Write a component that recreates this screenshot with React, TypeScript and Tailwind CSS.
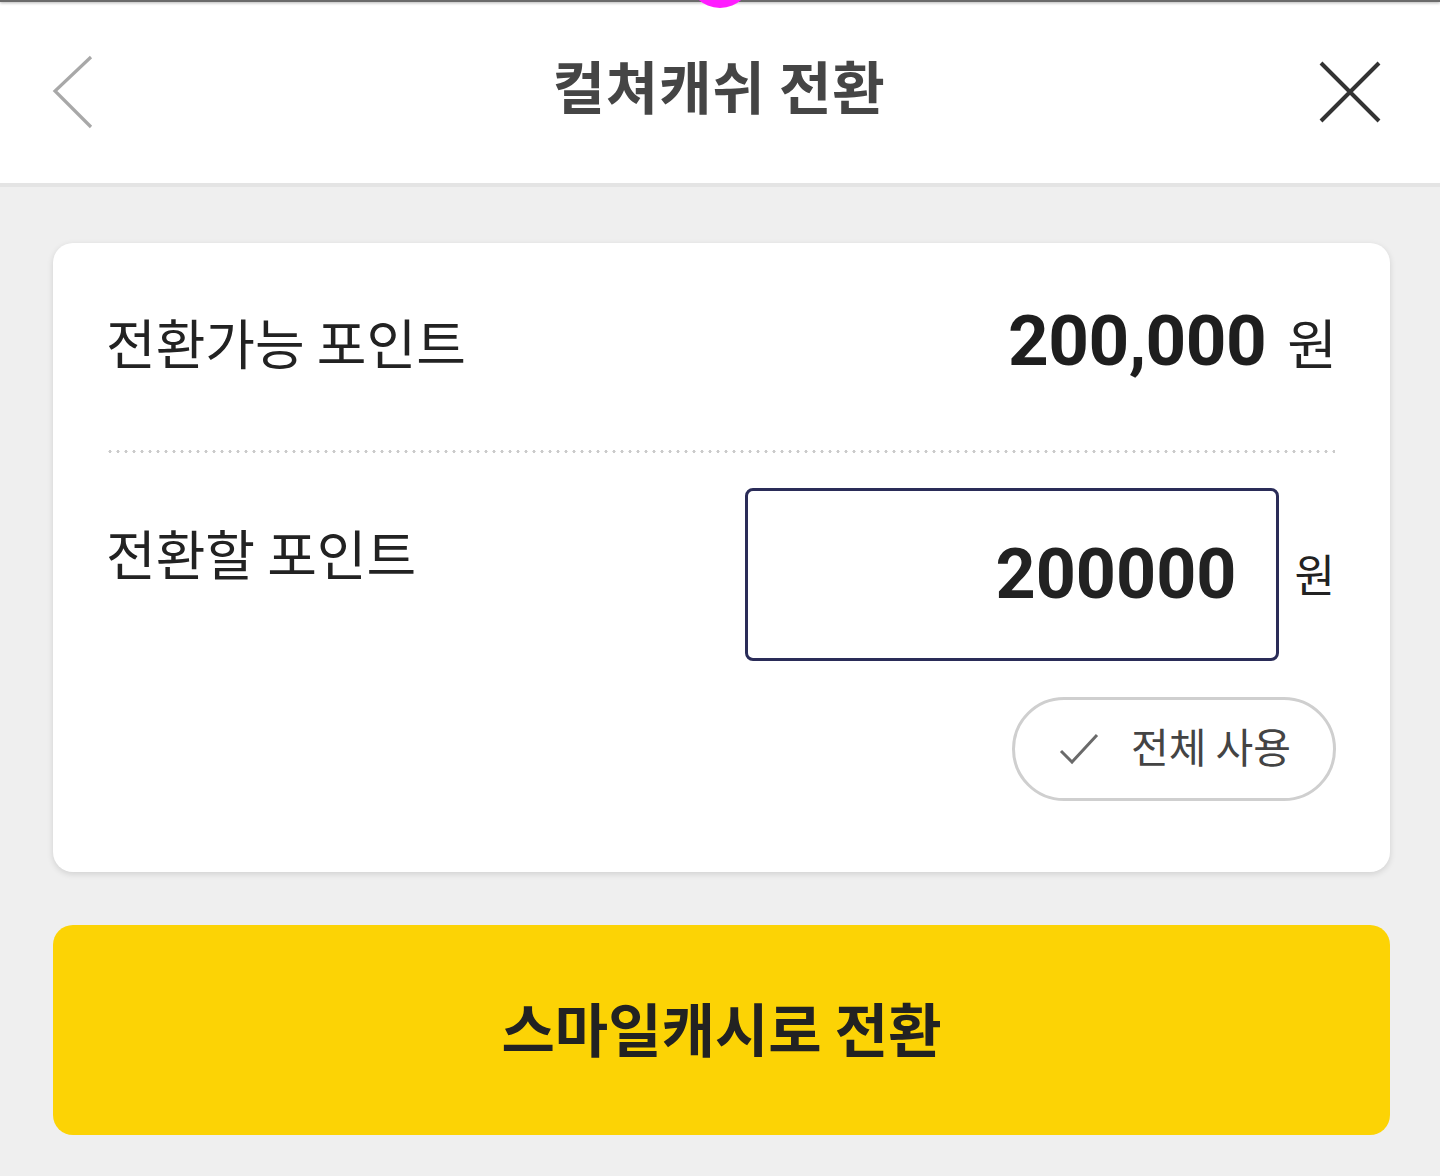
import React from "react";

const KR = "font-['Noto_Sans_CJK_KR','Noto_Sans',sans-serif]";
const NUM = "font-['Roboto','Noto_Sans_CJK_KR',sans-serif]";

export default function App() {
  return (
    <div className={`min-h-[1176px] w-[1440px] bg-[#efefef] ${KR}`}>
      {/* 상단 헤더 */}
      <header className="relative h-[187px] bg-white border-b-[4px] border-[#e4e4e4] overflow-hidden">
        <div className="h-[2px] bg-[#6b6b6b] shadow-[0_1px_3px_rgba(0,0,0,0.35)]" />
        <span className="absolute left-[688px] top-[-56px] w-[64px] h-[64px] rounded-full bg-[#ff1cff]" />

        <div className="grid grid-cols-[1fr_auto_1fr] items-center h-[181px] pl-[52px] pr-[56px]">
          <button className="w-[44px] h-[80px] flex items-center">
            <svg width="44" height="80" viewBox="0 0 44 80" fill="none">
              <path d="M39 4 L3 38 L39 74" stroke="#a8a8a8" strokeWidth="3.2" />
            </svg>
          </button>
          <h1 className="text-[57px] font-bold text-[#454545] tracking-[0.8px] -mt-[16px] pl-[2px]">
            컬쳐캐쉬 전환
          </h1>
          <button className="justify-self-end w-[66px] h-[66px] flex items-center justify-center">
            <svg width="66" height="66" viewBox="0 0 66 66" fill="none">
              <path d="M3 3 L61 61 M61 3 L3 61" stroke="#333" strokeWidth="4" />
            </svg>
          </button>
        </div>
      </header>

      <main className="pl-[53px] pr-[50px] pt-[56px] pb-[41px] flex flex-col gap-[53px]">
        {/* 포인트 카드 */}
        <section className="bg-white rounded-[20px] shadow-[0_2px_6px_rgba(0,0,0,0.13)] pl-[53px] pr-[55px] pb-[71px]">
          <div className="h-[207px] flex items-center justify-between pb-[10px]">
            <span className="text-[54px] text-[#222]">전환가능 포인트</span>
            <span className="flex items-center gap-[21px] -mr-[2px]">
              <span className={`${NUM} text-[71px] font-bold text-[#1e1e1e] tracking-[-0.5px]`}>
                200,000
              </span>
              <span className="text-[54px] text-[#222]">원</span>
            </span>
          </div>

          <div className="h-[3px] bg-[radial-gradient(circle,#cbcbcb_1.4px,transparent_1.7px)] bg-[length:8px_3px]" />

          <div className="flex justify-between pt-[35px]">
            <span className="text-[54px] text-[#222] mt-[24px]">전환할 포인트</span>
            <div className="flex flex-col items-end gap-[36px]">
              <div className="flex items-center gap-[16px]">
                <div className="w-[534px] h-[173px] border-[3px] border-[#2a2c58] rounded-[8px] flex items-center justify-end pr-[39px]">
                  <span className={`${NUM} text-[70px] font-bold text-[#222]`}>200000</span>
                </div>
                <span className="text-[44px] text-[#222] -mt-[4px]">원</span>
              </div>
              <button className="w-[324px] h-[104px] rounded-full border-[3px] border-[#cfcfcf] flex items-center pl-[44px] gap-[32px] -mr-[1px]">
                <svg width="40" height="32" viewBox="0 0 40 32" fill="none">
                  <path d="M2 18 L13 29 L38 2" stroke="#6a6a6a" strokeWidth="3" />
                </svg>
                <span className="text-[41px] text-[#444] -mt-[6px]">전체 사용</span>
              </button>
            </div>
          </div>
        </section>

        {/* 전환 버튼 */}
        <button className="h-[210px] w-full rounded-[20px] bg-[#fcd305] flex items-center justify-center">
          <span className="text-[58px] font-bold text-[#222] -mt-[6px]">스마일캐시로 전환</span>
        </button>
      </main>
    </div>
  );
}
